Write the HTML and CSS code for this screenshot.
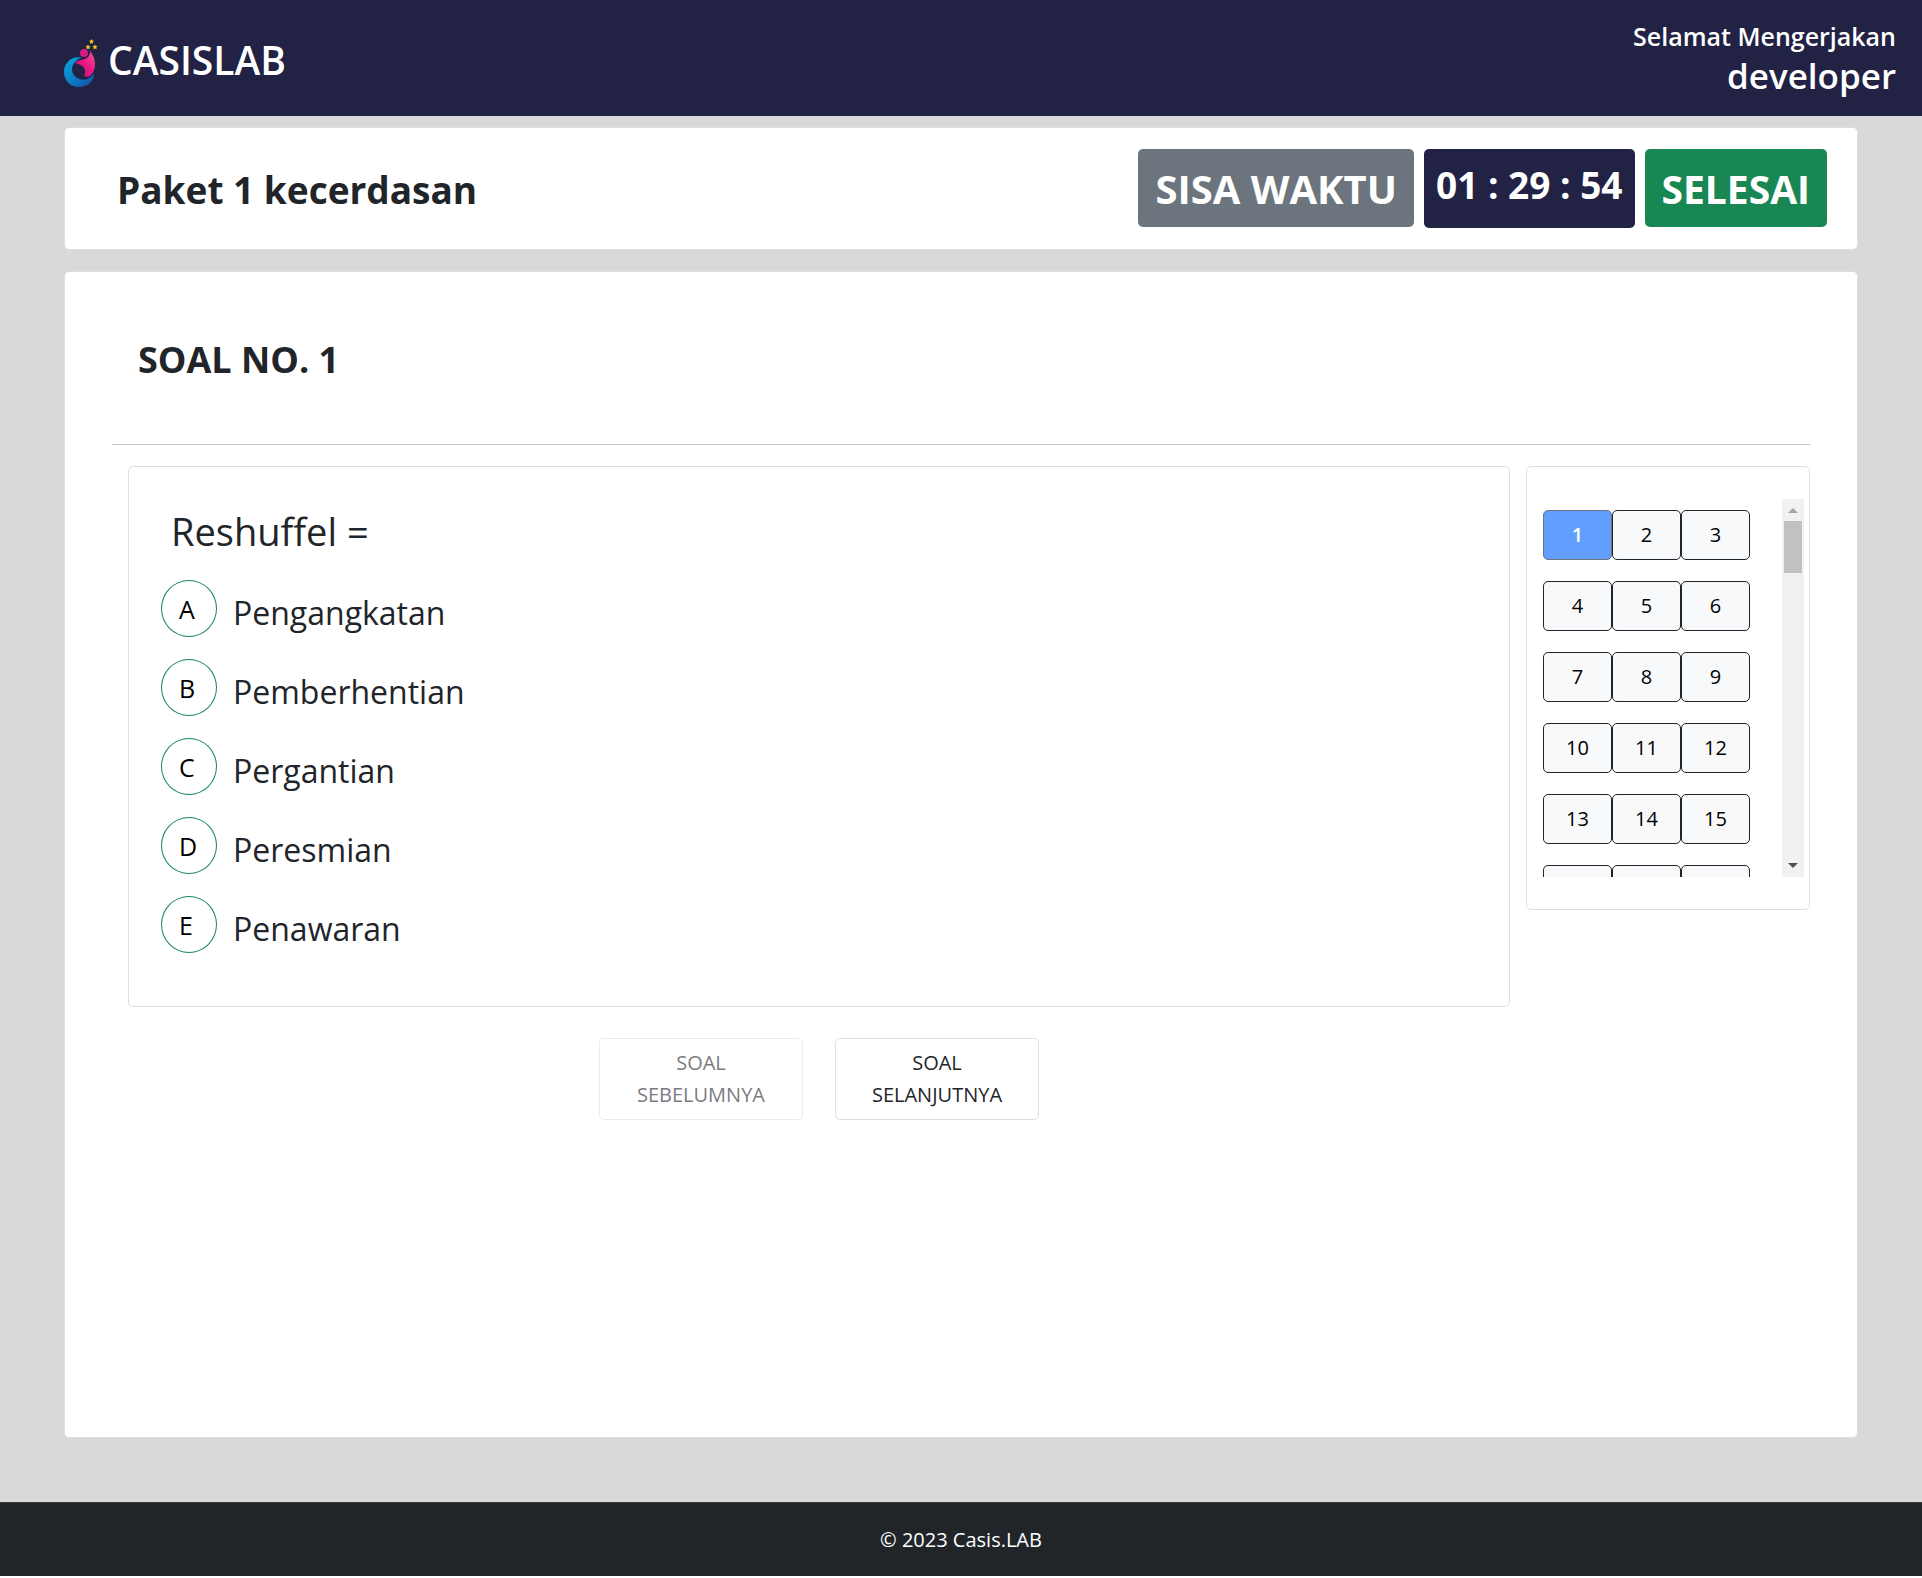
FILE: index.html
```html
<!DOCTYPE html>
<html lang="id">
<head>
<meta charset="utf-8">
<meta name="viewport" content="width=device-width, initial-scale=1">
<title>CASISLAB</title>
<link rel="stylesheet" href="styles.css">
</head>
<body>
<header class="topbar">
  <a class="brand" href="#">
    <svg class="logo" viewBox="0 0 34 50" aria-hidden="true">
      <defs>
        <linearGradient id="blue" x1="0" y1="0" x2="1" y2="1"><stop offset="0" stop-color="#0aa6dc"/><stop offset=".5" stop-color="#0b7fca"/><stop offset="1" stop-color="#164a9c"/></linearGradient>
        <linearGradient id="pink" x1="1" y1="0" x2="0" y2="1"><stop offset="0" stop-color="#f5588f"/><stop offset=".5" stop-color="#e91583"/><stop offset="1" stop-color="#b0187f"/></linearGradient>
      </defs>
      <path fill="url(#blue)" d="M18 19C8 16 0 24 0 33c0 9 7 15 15 15 8 0 15-5 15-14-3 5-8 8-14 6-8-2-11-12-4-18 2-2 4-3 6-3z"/>
      <path fill="url(#pink)" d="M26 12c6 7 7 18 1 24-2 2-4 2-7 1 3-5 1-11-9-13 3-3 7-3 10-4 4-2 5-4 5-8z"/>
      <circle cx="20" cy="14" r="4" fill="#d81b86"/>
      <path fill="#f2c31b" d="M27.500 0l.8 1.600 1.700.2-1.200 1.200.3 1.800-1.600-.9-1.600.9.3-1.800-1.200-1.200 1.700-.2zM24 5.500l.8 1.600 1.700.2-1.200 1.200.3 1.800-1.600-.9-1.600.9.3-1.800-1.200-1.200 1.700-.2zM31 5.500l.8 1.600 1.700.2-1.200 1.200.3 1.800-1.600-.9-1.600.9.3-1.800-1.200-1.200 1.700-.2z"/>
    </svg>
    <span>CASISLAB</span>
  </a>
  <div class="greeting">
    <span class="greeting-label">Selamat Mengerjakan</span>
    <span class="greeting-name">developer</span>
  </div>
</header>

<main class="page">
  <section class="card package">
    <h1 class="package-title">Paket 1 kecerdasan</h1>
    <div class="package-tools">
      <span class="pill pill-label">SISA WAKTU</span>
      <span class="pill pill-timer" role="timer">01 : 29 : 54</span>
      <button class="pill pill-finish" type="button">SELESAI</button>
    </div>
  </section>

  <section class="card exam">
    <h2 class="exam-title">SOAL NO. 1</h2>
    <div class="exam-body">
      <div class="exam-main">
        <div class="box question">
          <p class="question-text">Reshuffel =</p>
          <ul class="answers">
            <li class="answer"><button class="letter" type="button" id="a">A</button><label for="a">Pengangkatan</label></li>
            <li class="answer"><button class="letter" type="button" id="b">B</button><label for="b">Pemberhentian</label></li>
            <li class="answer"><button class="letter" type="button" id="c">C</button><label for="c">Pergantian</label></li>
            <li class="answer"><button class="letter" type="button" id="d">D</button><label for="d">Peresmian</label></li>
            <li class="answer"><button class="letter" type="button" id="e">E</button><label for="e">Penawaran</label></li>
          </ul>
        </div>
        <div class="pager">
          <button class="pager-btn" type="button" disabled>SOAL SEBELUMNYA</button>
          <button class="pager-btn" type="button">SOAL SELANJUTNYA</button>
        </div>
      </div>
      <aside class="box numbers">
        <div class="numbers-list">
          <button class="num num-active" type="button">1</button>
          <button class="num" type="button">2</button>
          <button class="num" type="button">3</button>
          <button class="num" type="button">4</button>
          <button class="num" type="button">5</button>
          <button class="num" type="button">6</button>
          <button class="num" type="button">7</button>
          <button class="num" type="button">8</button>
          <button class="num" type="button">9</button>
          <button class="num" type="button">10</button>
          <button class="num" type="button">11</button>
          <button class="num" type="button">12</button>
          <button class="num" type="button">13</button>
          <button class="num" type="button">14</button>
          <button class="num" type="button">15</button>
          <button class="num" type="button">16</button>
          <button class="num" type="button">17</button>
          <button class="num" type="button">18</button>
        </div>
        <div class="scrollbar" aria-hidden="true">
          <svg class="arrow" viewBox="0 0 22 22"><path fill="#a3a3a3" d="M6 14l5-5 5 5z"/></svg>
          <div class="thumb"></div>
          <svg class="arrow arrow-down" viewBox="0 0 22 22"><path fill="#505050" d="M6 8l5 5 5-5z"/></svg>
        </div>
      </aside>
    </div>
  </section>
</main>

<footer class="footer">© 2023 Casis.LAB</footer>
</body>
</html>
```
FILE: styles.css
```css
* { box-sizing: border-box; }

body {
  margin: 0;
  background: #fff;
  color: #212529;
  font-family: "Open Sans", "Noto Sans", sans-serif;
  font-size: 20px;
  line-height: 32px;
}

button { font: inherit; color: inherit; cursor: pointer; }
h1, h2, p, ul { margin: 0; padding: 0; }
ul { list-style: none; }

.topbar {
  display: flex;
  justify-content: space-between;
  height: 116px;
  padding: 16px 26px 0 64px;
  background: #222244;
  color: #fff;
}
.brand {
  display: flex;
  align-items: center;
  gap: 10px;
  align-self: flex-start;
  padding-top: 16px;
  color: inherit;
  font-size: 39px;
  line-height: 56px;
  font-weight: 600;
  text-decoration: none;
}
.brand span { padding-bottom: 8px; }
.logo { width: 34px; height: 50px; }
.greeting { display: flex; flex-direction: column; align-items: flex-end; font-weight: 600; }
.greeting-label { font-size: 25px; line-height: 40px; }
.greeting-name { font-size: 35px; line-height: 40px; }

.page {
  display: flex;
  flex-direction: column;
  gap: 21px;
  padding: 11px 64px 64px;
  background: #d9d9d9;
}
.card {
  border: 1px solid #dfdfdf;
  border-radius: 5px;
  background: #fff;
}
.package {
  display: flex;
  justify-content: space-between;
  height: 123px;
  padding: 21px 30px 0 52px;
}
.package-title { padding-top: 16px; font-size: 37px; line-height: 50px; font-weight: 700; }
.package-tools { display: flex; align-items: flex-start; gap: 10px; }
.pill {
  height: 78px;
  border: 0;
  border-radius: 5px;
  padding: 2px 17px 0;
  color: #fff;
  font-size: 40px;
  line-height: 76px;
  font-weight: 700;
  white-space: nowrap;
}
.pill-label { background: #6c757d; }
.pill-timer { height: 79px; padding: 0 12px; background: #222244; font-size: 37px; line-height: 72px; }
.pill-finish { background: #198754; font-size: 39px; }

.exam { min-height: 1167px; padding: 58px 47px 0; }
.exam-title {
  padding: 5px 26px 59px;
  border-bottom: 1px solid #c8c9ca;
  font-size: 36px;
  line-height: 50px;
  font-weight: 700;
}
.exam-body { display: flex; align-items: flex-start; gap: 16px; padding: 21px 0 0 16px; }
.exam-main { flex: 1; }
.box { border: 1px solid #dfdfdf; border-radius: 5px; }
.question { min-height: 541px; padding: 36px 32px; }
.question-text { padding: 0 10px; font-size: 38px; line-height: 56px; }
.answers { display: flex; flex-direction: column; gap: 22px; padding-top: 21px; }
.answer { display: flex; align-items: center; gap: 16px; }
.answer label { padding-top: 8px; font-size: 32px; line-height: 48px; }
.letter {
  width: 56px;
  height: 57px;
  padding: 0 0 0 17px;
  border: 1px solid #198754;
  border-radius: 50%;
  background: #fff;
  color: #000;
  font-size: 25px;
  text-align: left;
}
.pager { display: flex; justify-content: center; gap: 32px; padding-top: 31px; }
.pager-btn {
  width: 204px;
  height: 82px;
  padding: 0 32px;
  border: 1px solid #dfdfdf;
  border-radius: 5px;
  background: #fff;
}
.pager-btn:disabled { opacity: .6; cursor: default; }

.numbers { display: flex; justify-content: space-between; width: 284px; padding: 32px 5px 32px 16px; }
.numbers-list {
  display: grid;
  grid-template-columns: repeat(3, 69px);
  grid-auto-rows: 50px;
  row-gap: 21px;
  height: 378px;
  padding-top: 11px;
  overflow-y: auto;
  scrollbar-width: none;
}
.num {
  padding: 0;
  border: 1px solid #212529;
  border-radius: 5px;
  background: #f8f9fa;
  color: #000;
}
.num-active { border-color: #6c757d; background: #619fff; color: #fff; font-weight: 600; }
.scrollbar { display: flex; flex-direction: column; width: 22px; background: #f1f1f1; }
.arrow { width: 22px; height: 22px; }
.arrow-down { margin-top: auto; }
.thumb { height: 52px; margin: 0 2px; background: #c1c1c1; }

.footer {
  height: 74px;
  border-top: 1px solid #373b3e;
  background: #212529;
  color: #fff;
  line-height: 74px;
  text-align: center;
}
```
